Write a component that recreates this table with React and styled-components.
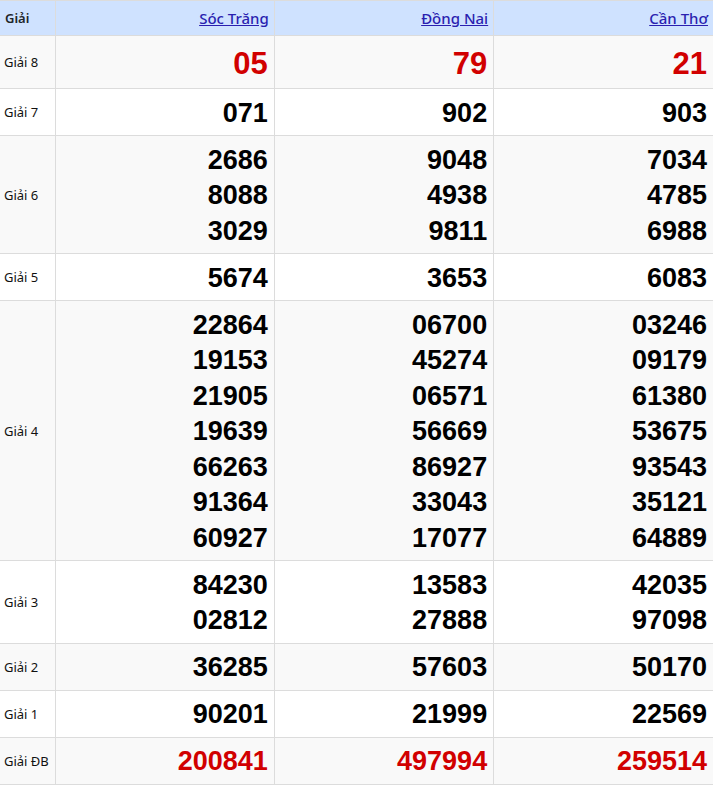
import React from 'react'
import styled, { createGlobalStyle } from 'styled-components'

const GlobalStyle = createGlobalStyle`
  body {
    margin: 0;
    background: #fff;
    font-family: "Noto Sans", "Open Sans", sans-serif;
  }
`

const provinces = ['Sóc Trăng', 'Đồng Nai', 'Cần Thơ']

const prizes = [
  { name: 'Giải 8', big: true, values: [['05'], ['79'], ['21']] },
  { name: 'Giải 7', values: [['071'], ['902'], ['903']] },
  {
    name: 'Giải 6',
    values: [
      ['2686', '8088', '3029'],
      ['9048', '4938', '9811'],
      ['7034', '4785', '6988'],
    ],
  },
  { name: 'Giải 5', values: [['5674'], ['3653'], ['6083']] },
  {
    name: 'Giải 4',
    values: [
      ['22864', '19153', '21905', '19639', '66263', '91364', '60927'],
      ['06700', '45274', '06571', '56669', '86927', '33043', '17077'],
      ['03246', '09179', '61380', '53675', '93543', '35121', '64889'],
    ],
  },
  {
    name: 'Giải 3',
    values: [
      ['84230', '02812'],
      ['13583', '27888'],
      ['42035', '97098'],
    ],
  },
  { name: 'Giải 2', values: [['36285'], ['57603'], ['50170']] },
  { name: 'Giải 1', values: [['90201'], ['21999'], ['22569']] },
  { name: 'Giải ĐB', special: true, values: [['200841'], ['497994'], ['259514']] },
]

const App = () => {
  return (
    <>
      <GlobalStyle />
      <Table>
        <colgroup>
          <col style={{ width: 55 }} />
          <col />
          <col />
          <col />
        </colgroup>
        <thead>
          <tr>
            <HeadCell>Giải</HeadCell>
            {provinces.map((p) => (
              <HeadCell key={p} $right>
                <ProvinceLink href="#">{p}</ProvinceLink>
              </HeadCell>
            ))}
          </tr>
        </thead>
        <tbody>
          {prizes.map((prize, i) => (
            <Row key={prize.name} $striped={i % 2 === 0}>
              <LabelCell>{prize.name}</LabelCell>
              {prize.values.map((list, j) => (
                <NumberCell key={j}>
                  {list.map((n) => (
                    <Number key={n} $big={prize.big} $red={prize.big || prize.special}>
                      {n}
                    </Number>
                  ))}
                </NumberCell>
              ))}
            </Row>
          ))}
        </tbody>
      </Table>
    </>
  )
}

const Table = styled.table`
  width: 100%;
  border-collapse: collapse;
  table-layout: fixed;
  border-top: 1px solid #dcdcdc;
`

const HeadCell = styled.th`
  background: #cfe2ff;
  border: 1px solid #dcdcdc;
  border-top: none;
  padding: 0 5px;
  height: 34px;
  font-size: 13px;
  font-weight: 600;
  color: #212529;
  text-align: ${(p) => (p.$right ? 'right' : 'left')};
  vertical-align: middle;
  &:first-child {
    border-left: none;
  }
  &:last-child {
    border-right: none;
  }
`

const ProvinceLink = styled.a`
  color: #2a1fb0;
  font-size: 15px;
  font-weight: 500;
  text-decoration: underline;
`

const Row = styled.tr`
  background: ${(p) => (p.$striped ? '#f9f9f9' : '#fff')};
`

const LabelCell = styled.td`
  border: 1px solid #dcdcdc;
  border-left: none;
  padding: 0 4px;
  font-size: 13px;
  color: #111;
  vertical-align: middle;
`

const NumberCell = styled.td`
  border: 1px solid #dcdcdc;
  padding: 6.5px 6px 4px 5px;
  text-align: right;
  vertical-align: middle;
  &:last-child {
    border-right: none;
  }
`

const Number = styled.div`
  font-family: "Liberation Sans", Arial, sans-serif;
  font-weight: 700;
  font-size: ${(p) => (p.$big ? '31px' : '27px')};
  line-height: ${(p) => (p.$big ? '41.5px' : '35.5px')};
  color: ${(p) => (p.$red ? '#d10000' : '#000')};
`

export default App
